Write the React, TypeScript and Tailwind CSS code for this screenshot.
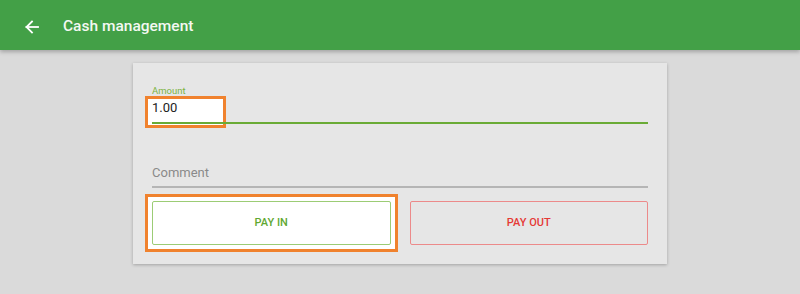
import React from "react";

export default function App() {
  return (
    <div className="w-[800px] h-[294px] bg-[#dadada] overflow-hidden" style={{ fontFamily: "Roboto, 'Liberation Sans', sans-serif" }}>
      <div className="h-[50px] bg-[#43a047] flex items-center pt-[3px] shadow-[0_2px_4px_rgba(0,0,0,0.25)] relative z-10">
        <div className="w-[63px] flex items-center pl-[24px]">
          <svg width="16" height="16" viewBox="0 0 16 16" fill="none" stroke="white" strokeWidth="1.8" strokeLinecap="square">
            <path d="M14 8H2.5" />
            <path d="M8 2.5L2.5 8L8 13.5" />
          </svg>
        </div>
        <span className="text-[#f4f8f2] text-[15.5px] font-medium">Cash management</span>
      </div>
      <div className="flex justify-center pt-[13px]">
        <div className="w-[534px] bg-[#e6e6e6] shadow-[0_1px_3px_rgba(0,0,0,0.25)] px-[19px] pt-[22px] pb-[19px]">
          <div className="relative">
            <div className="absolute left-[-7px] top-[11px] w-[81px] h-[32px] bg-white border-[3px] border-[#f0822e]" />
            <div className="relative text-[9.5px] leading-[12px] text-[#7cb342]">Amount</div>
            <div className="relative text-[13px] leading-[16px] text-[#222] pt-[3px]">1.00</div>
            <div className="relative mt-[6px] h-[2px] bg-[#6aab36]" />
          </div>
          <div className="mt-[41px] text-[13px] leading-[16px] text-[#8a8a8a]">Comment</div>
          <div className="mt-[5px] h-[2px] bg-[#b5b5b5]" />
          <div className="mt-[13px] flex gap-[19px]">
            <div className="relative flex-1">
              <div className="absolute left-[-7px] top-[-7px] right-[-7px] bottom-[-7px] bg-white border-[3px] border-[#f0822e]" />
              <button className="relative w-full h-[44px] bg-white border border-[#9ccc75] rounded-[2px] text-[11px] text-[#5fa832] font-medium">PAY IN</button>
            </div>
            <div className="flex-1">
              <button className="w-full h-[44px] border border-[#ec8a8a] rounded-[2px] text-[11px] text-[#e53935] font-medium">PAY OUT</button>
            </div>
          </div>
        </div>
      </div>
    </div>
  );
}
